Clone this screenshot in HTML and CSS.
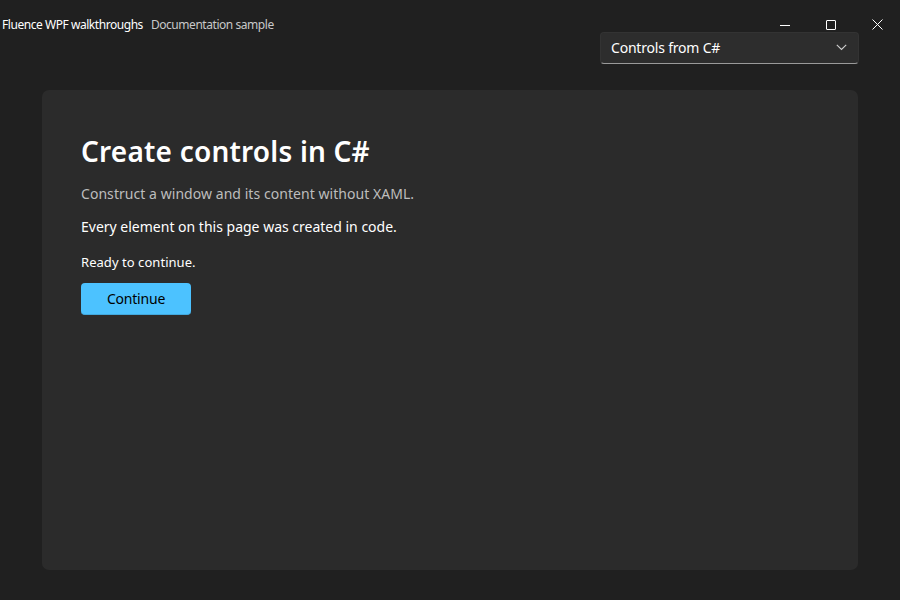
FILE: index.html
```html
<!DOCTYPE html>
<html lang="en">
<head>
  <meta charset="UTF-8">
  <title>Fluence WPF walkthroughs</title>
  <link rel="stylesheet" href="styles.css">
</head>
<body>
  <div class="window">
    <div class="titlebar">
      <div class="title">
        <span class="app-name">Fluence WPF walkthroughs</span>
        <span class="app-sub">Documentation sample</span>
      </div>
      <div class="caption-buttons">
        <div class="cap-btn">
          <svg width="10" height="10" viewBox="0 0 10 10"><path d="M0 5.5h10" stroke="#fff" stroke-width="1"/></svg>
        </div>
        <div class="cap-btn">
          <svg width="10" height="10" viewBox="0 0 10 10"><rect x="0.5" y="0.5" width="9" height="9" rx="0.5" fill="none" stroke="#fff" stroke-width="1"/></svg>
        </div>
        <div class="cap-btn">
          <svg width="11" height="11" viewBox="0 0 11 11"><path d="M0.5 0.5l10 10M10.5 0.5l-10 10" stroke="#fff" stroke-width="1"/></svg>
        </div>
      </div>
    </div>

    <div class="toolbar">
      <div class="combo">
        <span>Controls from C#</span>
        <svg width="11" height="7" viewBox="0 0 11 7"><path d="M0.8 0.8l4.7 4.7 4.7-4.7" fill="none" stroke="#cfcfcf" stroke-width="1.1"/></svg>
      </div>
    </div>

    <div class="card">
      <h1>Create controls in C#</h1>
      <p class="lead">Construct a window and its content without XAML.</p>
      <p class="body">Every element on this page was created in code.</p>
      <p class="status">Ready to continue.</p>
      <button class="accent-btn">Continue</button>
    </div>
  </div>
</body>
</html>
```

FILE: styles.css
```css
html, body {
  margin: 0;
  height: 100%;
  background: #202020;
  color: #fff;
  font-family: "Noto Sans", "Open Sans", sans-serif;
}
.window {
  height: 600px;
  display: flex;
  flex-direction: column;
}
.titlebar {
  height: 32px;
  display: flex;
  align-items: flex-start;
  justify-content: space-between;
}
.title {
  padding: 17px 0 0 2px;
  font-size: 12px;
  line-height: 16px;
  display: flex;
  gap: 8px;
  letter-spacing: -0.45px;
}
.app-sub {
  color: #c8c8c8;
}
.caption-buttons {
  display: flex;
  height: 48px;
}
.cap-btn {
  width: 46px;
  height: 48px;
  display: flex;
  align-items: center;
  justify-content: center;
}
.cap-btn svg {
  margin-top: 1px;
}
.toolbar {
  display: flex;
  justify-content: flex-end;
  padding: 0 41px 0 0;
}
.combo {
  width: 259px;
  height: 32px;
  box-sizing: border-box;
  background: #2d2d2d;
  border: 1px solid #333;
  border-bottom: 1px solid #9a9a9a;
  border-radius: 4px;
  display: flex;
  align-items: center;
  justify-content: space-between;
  padding: 0 11px 1px 10px;
  font-size: 14px;
  letter-spacing: -0.2px;
}
.card {
  flex: 1;
  margin: 26px 42px 30px;
  background: #2b2b2b;
  border-radius: 7px;
  padding: 42px 39px;
}
h1 {
  margin: 0 0 14px;
  font-size: 28px;
  font-weight: 600;
  line-height: 38px;
  letter-spacing: 0.2px;
}
p {
  margin: 0;
  font-size: 14px;
  line-height: 20px;
  letter-spacing: 0;
}
.lead {
  color: #bdbdbd;
  margin-bottom: 13px;
  letter-spacing: 0.05px;
}
.body {
  margin-bottom: 15px;
}
.status {
  font-size: 13px;
  margin-bottom: 11px;
  letter-spacing: 0.05px;
}
.accent-btn {
  width: 110px;
  height: 32px;
  background: #4cc2ff;
  color: #000;
  border: none;
  border-bottom: 1px solid #42a8dd;
  border-radius: 4px;
  font-family: inherit;
  font-size: 14px;
  letter-spacing: -0.2px;
  cursor: pointer;
}
```
